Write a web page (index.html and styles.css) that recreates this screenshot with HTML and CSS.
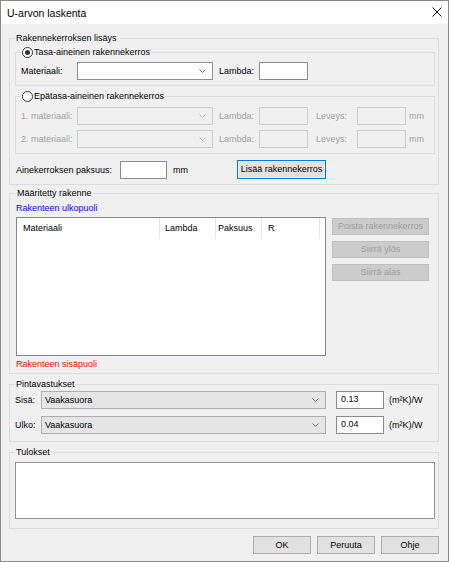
FILE: index.html
```html
<!DOCTYPE html>
<html lang="fi">
<head>
<meta charset="utf-8">
<title>U-arvon laskenta</title>
<link rel="stylesheet" href="styles.css">
</head>
<body>
<div class="window">
  <div class="titlebar">
    <span class="title">U-arvon laskenta</span>
    <svg class="close" width="10" height="10" viewBox="0 0 10 10"><path d="M0.5 0.5 L9.5 9.5 M9.5 0.5 L0.5 9.5" stroke="#111" stroke-width="1" fill="none"/></svg>
  </div>
  <div class="body">
    <fieldset class="group g1">
      <legend>Rakennekerroksen lisäys</legend>
      <fieldset class="sub subA">
        <legend class="rlegend"><span class="radio checked"></span><span>Tasa-aineinen rakennekerros</span></legend>
        <div class="row">
          <span class="lbl">Materiaali:</span>
          <div class="combo"><svg class="chev" width="7" height="4" viewBox="0 0 7 4"><polyline points="0.5,0.5 3.5,3.5 6.5,0.5" fill="none" stroke="#6a6a6a" stroke-width="1"/></svg></div>
          <span class="lbl2">Lambda:</span>
          <div class="tb"></div>
        </div>
      </fieldset>
      <fieldset class="sub subB">
        <legend class="rlegend"><span class="radio"></span><span>Epätasa-aineinen rakennekerros</span></legend>
        <div class="row dis">
          <span class="lbl">1. materiaali:</span>
          <div class="combo disabled"><svg class="chev" width="7" height="4" viewBox="0 0 7 4"><polyline points="0.5,0.5 3.5,3.5 6.5,0.5" fill="none" stroke="#b8b8b8" stroke-width="1"/></svg></div>
          <span class="lbl2">Lambda:</span>
          <div class="tb disabled"></div>
          <span class="lbl3">Leveys:</span>
          <div class="tb disabled"></div>
          <span class="unit">mm</span>
        </div>
        <div class="row dis">
          <span class="lbl">2. materiaali:</span>
          <div class="combo disabled"><svg class="chev" width="7" height="4" viewBox="0 0 7 4"><polyline points="0.5,0.5 3.5,3.5 6.5,0.5" fill="none" stroke="#b8b8b8" stroke-width="1"/></svg></div>
          <span class="lbl2">Lambda:</span>
          <div class="tb disabled"></div>
          <span class="lbl3">Leveys:</span>
          <div class="tb disabled"></div>
          <span class="unit">mm</span>
        </div>
      </fieldset>
      <div class="row thick">
        <span class="lblthick">Ainekerroksen paksuus:</span>
        <div class="tb tbthick"></div>
        <span class="mmthick">mm</span>
        <button class="btn default">Lisää rakennekerros</button>
      </div>
    </fieldset>

    <fieldset class="group g2">
      <legend>Määritetty rakenne</legend>
      <div class="outside">Rakenteen ulkopuoli</div>
      <div class="listwrap">
        <div class="list">
          <div class="header">
            <span class="col c1">Materiaali</span>
            <span class="col c2">Lambda</span>
            <span class="col c3">Paksuus</span>
            <span class="col c4">R</span>
          </div>
        </div>
        <div class="sidebtns">
          <button class="btn side" disabled>Poista rakennekerros</button>
          <button class="btn side" disabled>Siirrä ylös</button>
          <button class="btn side" disabled>Siirrä alas</button>
        </div>
      </div>
      <div class="inside">Rakenteen sisäpuoli</div>
    </fieldset>

    <fieldset class="group g3">
      <legend>Pintavastukset</legend>
      <div class="row prow">
        <span class="plbl">Sisä:</span>
        <div class="combo gray"><span class="ctext">Vaakasuora</span><svg class="chev" width="7" height="4" viewBox="0 0 7 4"><polyline points="0.5,0.5 3.5,3.5 6.5,0.5" fill="none" stroke="#6a6a6a" stroke-width="1"/></svg></div>
        <div class="tb tbval">0.13</div>
        <span class="punit">(m²K)/W</span>
      </div>
      <div class="row prow">
        <span class="plbl">Ulko:</span>
        <div class="combo gray"><span class="ctext">Vaakasuora</span><svg class="chev" width="7" height="4" viewBox="0 0 7 4"><polyline points="0.5,0.5 3.5,3.5 6.5,0.5" fill="none" stroke="#6a6a6a" stroke-width="1"/></svg></div>
        <div class="tb tbval">0.04</div>
        <span class="punit">(m²K)/W</span>
      </div>
    </fieldset>

    <fieldset class="group g4">
      <legend>Tulokset</legend>
      <div class="results"></div>
    </fieldset>

    <div class="footer">
      <button class="btn foot">OK</button>
      <button class="btn foot">Peruuta</button>
      <button class="btn foot">Ohje</button>
    </div>
  </div>
</div>
</body>
</html>
```

FILE: styles.css
```css
html, body {
  margin: 0;
  padding: 0;
  background: #ffffff;
}
body {
  font-family: "Liberation Sans", Arial, sans-serif;
  font-size: 9px;
  color: #000;
}
.window {
  width: 449px;
  height: 562px;
  box-sizing: border-box;
  border: 1px solid #8a8a8a;
  background: #f0f0f0;
  display: flex;
  flex-direction: column;
}
.titlebar {
  height: 23px;
  flex: none;
  background: #ffffff;
  display: flex;
  align-items: center;
  justify-content: space-between;
  padding: 0 6px 0 6px;
}
.title {
  font-size: 10.5px;
  line-height: 14px;
}
.close {
  display: block;
  margin-top: -1px;
}
.body {
  flex: 1;
  display: flex;
  flex-direction: column;
  padding: 0 9px 0 8px;
}
fieldset {
  margin: 0;
  min-width: 0;
  border: 1px solid #dcdcdc;
}
legend {
  padding: 0 1px;
  height: 13px;
  line-height: 13px;
}
.group {
  padding: 1px 3px 5px 5px;
}
.g1 {
  margin-top: 8px;
}
.sub {
  padding: 3px 4px 5px 5px;
}
.subB {
  margin-top: 4px;
  padding-top: 4px;
}
.subB .row + .row {
  margin-top: 5px;
}
.rlegend {
  display: flex;
  align-items: center;
  padding: 0 1px 0 0;
}
.radio {
  width: 11px;
  height: 11px;
  box-sizing: border-box;
  border: 1px solid #333;
  border-radius: 50%;
  background: #fff;
  margin: 0 1px 0 1px;
  display: flex;
  align-items: center;
  justify-content: center;
}
.radio.checked::after {
  content: "";
  width: 5px;
  height: 5px;
  border-radius: 50%;
  background: #333;
}
.row {
  display: flex;
  align-items: center;
  height: 18px;
}
.lbl {
  width: 56px;
  flex: none;
}
.combo {
  width: 136px;
  height: 18px;
  box-sizing: border-box;
  border: 1px solid #8f8f8f;
  background: #fff;
  display: flex;
  align-items: center;
  justify-content: flex-end;
  padding-right: 6px;
  flex: none;
}
.combo.disabled {
  border-color: #cccccc;
  background: #f0f0f0;
}
.chev {
  display: block;
}
.lbl2 {
  margin-left: 6px;
  width: 40px;
  flex: none;
}
.lbl3 {
  margin-left: 8px;
  width: 41px;
  flex: none;
}
.unit {
  margin-left: 3px;
}
.tb {
  width: 49px;
  height: 18px;
  box-sizing: border-box;
  border: 1px solid #8a8a8a;
  background: #fff;
  flex: none;
}
.tb.disabled {
  border-color: #cccccc;
  background: #f0f0f0;
}
.dis {
  color: #a0a0a0;
}
.thick {
  margin-top: 6px;
  height: 19px;
}
.lblthick {
  margin-left: 1px;
  width: 104px;
  flex: none;
}
.tbthick {
  width: 47px;
}
.mmthick {
  margin-left: 6px;
  width: 64px;
  flex: none;
}
.btn {
  font-family: "Liberation Sans", Arial, sans-serif;
  font-size: 9px;
  color: #000;
  background: #e1e1e1;
  border: 1px solid #adadad;
  box-sizing: border-box;
  padding: 0;
  margin: 0;
  line-height: 13px;
}
.btn.default {
  width: 89px;
  height: 19px;
  border-color: #0078d7;
  box-shadow: inset 0 0 0 1px #e5f1fb;
}
.g2 {
  margin-top: 2px;
  padding: 1px 3px 2px 6px;
}
.outside {
  color: #0000ff;
  line-height: 14px;
}
.inside {
  color: #ff0000;
  line-height: 14px;
  margin-top: 1px;
}
.listwrap {
  display: flex;
  align-items: flex-start;
  margin-top: 2px;
}
.list {
  width: 310px;
  height: 139px;
  box-sizing: border-box;
  border: 1px solid #828790;
  background: #fff;
  flex: none;
}
.header {
  display: flex;
  height: 21px;
}
.col {
  box-sizing: border-box;
  height: 21px;
  line-height: 21px;
  border-right: 1px solid #e5e5e5;
  padding-left: 6px;
  flex: none;
}
.c1 { width: 143px; }
.c2 { width: 56px; padding-left: 5px; }
.c3 { width: 46px; padding-left: 2px; }
.c4 { width: 58px; }
.sidebtns {
  display: flex;
  flex-direction: column;
  gap: 6px;
  margin-left: 6px;
  margin-top: 1px;
}
.btn.side {
  width: 97px;
  height: 17px;
  background: #cccccc;
  border-color: #bfbfbf;
  color: #9c9c9c;
}
.g3 {
  margin-top: 4px;
  padding: 0 3px 7px 5px;
}
.prow + .prow {
  margin-top: 7px;
}
.plbl {
  width: 26px;
  flex: none;
}
.combo.gray {
  width: 285px;
  background: #e5e5e5;
  border-color: #adadad;
  justify-content: space-between;
  padding-left: 3px;
}
.tbval {
  width: 48px;
  margin-left: 10px;
  padding: 1px 0 0 4px;
  line-height: 12px;
  align-self: flex-start;
}
.punit {
  margin-left: 5px;
}
.g4 {
  margin-top: 4px;
  padding: 3px 3px 9px 5px;
}
.results {
  width: 420px;
  height: 57px;
  box-sizing: border-box;
  border: 1px solid #8f9296;
  background: #fff;
}
.footer {
  display: flex;
  justify-content: flex-end;
  gap: 6px;
  margin-top: 7px;
}
.btn.foot {
  width: 58px;
  height: 18px;
}
```
